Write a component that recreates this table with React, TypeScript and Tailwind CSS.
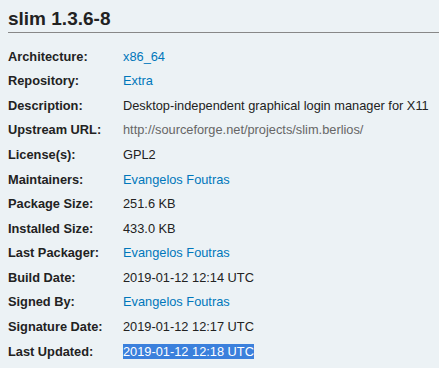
import React from "react";

type Row = { label: string; value: string; kind?: "link" | "url" | "sel" };

const rows: Row[] = [
  { label: "Architecture:", value: "x86_64", kind: "link" },
  { label: "Repository:", value: "Extra", kind: "link" },
  { label: "Description:", value: "Desktop-independent graphical login manager for X11" },
  { label: "Upstream URL:", value: "http://sourceforge.net/projects/slim.berlios/", kind: "url" },
  { label: "License(s):", value: "GPL2" },
  { label: "Maintainers:", value: "Evangelos Foutras", kind: "link" },
  { label: "Package Size:", value: "251.6 KB" },
  { label: "Installed Size:", value: "433.0 KB" },
  { label: "Last Packager:", value: "Evangelos Foutras", kind: "link" },
  { label: "Build Date:", value: "2019-01-12 12:14 UTC" },
  { label: "Signed By:", value: "Evangelos Foutras", kind: "link" },
  { label: "Signature Date:", value: "2019-01-12 12:17 UTC" },
  { label: "Last Updated:", value: "2019-01-12 12:18 UTC", kind: "sel" },
];

export default function App() {
  return (
    <div
      className="w-[439px] h-[368px] bg-[#ecf2f5] text-[#222] overflow-hidden pl-2"
      style={{ fontFamily: '"Liberation Sans", Arial, sans-serif' }}
    >
      <h2 className="pt-2 pb-[2px] text-[19px] leading-[22px] font-bold border-b border-[#888]">
        slim 1.3.6-8
      </h2>
      <div className="mt-[11.8px] grid grid-cols-[115px_1fr] text-[12.8px] leading-[16.56px]">
        {rows.map((r) => (
          <React.Fragment key={r.label}>
            <div className="py-1 font-bold whitespace-nowrap">{r.label}</div>
            <div className="py-1 whitespace-nowrap">
              {r.kind === "link" ? (
                <span className="text-[#0077bb]">{r.value}</span>
              ) : r.kind === "url" ? (
                <span className="text-[#666]">{r.value}</span>
              ) : r.kind === "sel" ? (
                <span className="bg-[#3b80dc] text-white">{r.value}</span>
              ) : (
                <span>{r.value}</span>
              )}
            </div>
          </React.Fragment>
        ))}
      </div>
    </div>
  );
}
